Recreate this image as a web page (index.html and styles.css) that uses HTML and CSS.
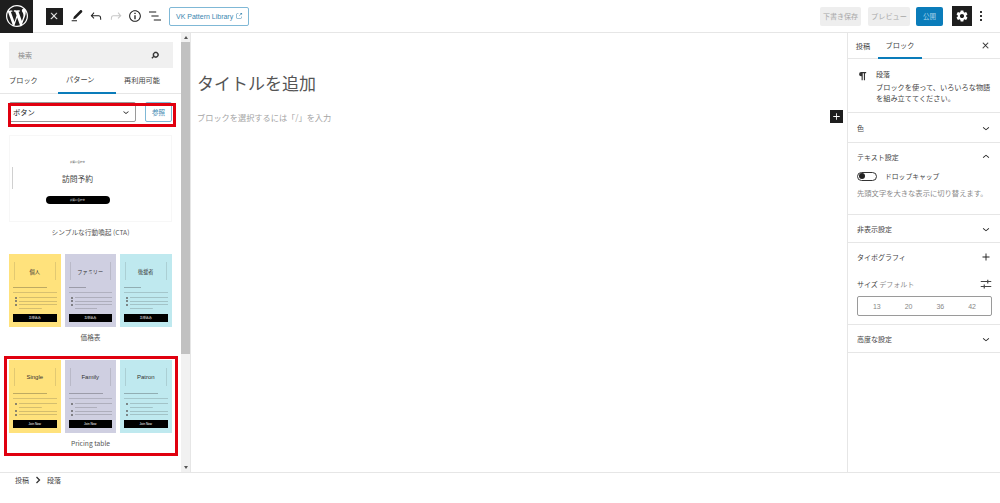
FILE: index.html
```html
<!DOCTYPE html>
<html lang="ja">
  <head>
    <meta charset="UTF-8" />
    <title>新規投稿を追加</title>
    <link rel="stylesheet" href="styles.css">
  </head>
  <body>
    <svg class="icon-defs" width="0" height="0">
      <symbol id="i-chev-down" viewBox="0 0 24 24"><path d="M17.5 11.6L12 16l-5.5-4.4.9-1.2L12 14l4.5-3.6 1 1.2z"/></symbol>
      <symbol id="i-chev-up" viewBox="0 0 24 24"><path d="M6.5 12.4L12 8l5.5 4.4-.9 1.2L12 10l-4.5 3.6-1-1.2z"/></symbol>
      <symbol id="i-close" viewBox="0 0 24 24"><path d="M13 11.8l6.1-6.3-1-1-6.1 6.2-6.1-6.2-1 1 6.1 6.3-6.5 6.7 1 1 6.5-6.6 6.5 6.6 1-1z"/></symbol>
      <symbol id="i-plus" viewBox="0 0 24 24"><path d="M18 11.2h-5.2V6h-1.6v5.2H6v1.6h5.2V18h1.6v-5.2H18z"/></symbol>
    </svg>

    <div class="editor">
      <header class="topbar">
        <a class="wp-logo">
          <svg width="22" height="22" viewBox="0 0 20 20"><path d="M20 10c0-5.51-4.49-10-10-10C4.48 0 0 4.49 0 10c0 5.52 4.48 10 10 10 5.51 0 10-4.48 10-10zM7.78 15.37L4.37 6.22c.55-.02 1.17-.08 1.17-.08.5-.06.44-1.13-.06-1.11 0 0-1.45.11-2.37.11-.18 0-.37 0-.58-.01C4.12 2.69 6.87 1.11 10 1.11c2.33 0 4.45.87 6.05 2.34-.68-.11-1.65.39-1.65 1.58 0 .74.45 1.36.9 2.1.35.61.55 1.36.55 2.46 0 1.49-1.4 5-1.4 5l-3.03-8.37c.54-.02.82-.17.82-.17.5-.05.44-1.25-.06-1.22 0 0-1.44.12-2.38.12-.87 0-2.33-.12-2.33-.12-.5-.03-.56 1.2-.06 1.22l.92.08 1.26 3.41zM17.41 10c.24-.64.74-1.87.43-4.25.7 1.29 1.05 2.71 1.05 4.25 0 3.29-1.73 6.24-4.4 7.78.97-2.59 1.94-5.2 2.92-7.78zM6.1 18.09C3.12 16.65 1.11 13.53 1.11 10c0-1.3.23-2.48.72-3.59C3.25 10.3 4.67 14.2 6.1 18.09zm4.03-6.63l2.58 6.98c-.86.29-1.76.45-2.71.45-.79 0-1.57-.11-2.29-.33.81-2.38 1.62-4.74 2.42-7.1z"/></svg>
        </a>
        <div class="tools">
          <button class="tool tool-dark"><svg class="bold" width="10" height="10"><use href="#i-close"/></svg></button>
          <button class="tool"><svg width="16" height="16" viewBox="0 0 24 24"><path d="M4 20h8v-1.5H4V20zM18.9 3.5c-.6-.6-1.5-.6-2.1 0L7.2 13.1l-.9 3.7 3.7-.9 9.6-9.6c.6-.6.6-1.5 0-2.1l-.7-.7z"/></svg></button>
          <button class="tool"><svg width="16" height="16" viewBox="0 0 24 24"><path d="M18.3 11.7c-.6-.6-1.4-.9-2.3-.9H6.7l2.9-3.3-1.1-1-4.5 5L8.5 16l1-1-2.7-2.7H16c.5 0 .9.2 1.3.5 1 1 1 3.4 1 4.5v.3h1.5v-.2c0-1.5 0-4.3-1.5-5.7z"/></svg></button>
          <button class="tool tool-off"><svg width="16" height="16" viewBox="0 0 24 24"><path d="M15.6 6.5l-1.1 1 2.9 3.3H8c-.9 0-1.7.3-2.3.9-1.4 1.5-1.4 4.2-1.4 5.6v.2h1.5v-.3c0-1.1 0-3.5 1-4.5.3-.3.7-.5 1.3-.5h9.2L14.5 15l1.1 1.1 4.6-4.6-4.6-5z"/></svg></button>
          <button class="tool"><svg width="16" height="16" viewBox="0 0 24 24"><path d="M12 3.2c-4.8 0-8.8 3.9-8.8 8.8 0 4.8 3.9 8.8 8.8 8.8 4.8 0 8.8-3.9 8.8-8.8 0-4.8-4-8.8-8.8-8.8zm0 16c-4 0-7.2-3.3-7.2-7.2C4.8 8 8 4.8 12 4.8s7.2 3.3 7.2 7.2c0 4-3.2 7.2-7.2 7.2zM11 17h2v-6h-2v6zm0-8h2V7h-2v2z"/></svg></button>
          <button class="tool"><svg width="16" height="16" viewBox="0 0 24 24"><path d="M13.8 5.2H3v1.5h10.8V5.2zm-3.6 12v1.5H21v-1.5H10.2zm7.2-6H6.6v1.5h10.8v-1.5z"/></svg></button>
        </div>
        <a class="vk-link">VK Pattern Library
          <svg width="8" height="8" viewBox="0 0 24 24"><path d="M18.2 17c0 .7-.6 1.2-1.2 1.2H7c-.7 0-1.2-.6-1.2-1.2V7c0-.7.6-1.2 1.2-1.2h3.2V4.2H7C5.5 4.2 4.2 5.5 4.2 7v10c0 1.5 1.2 2.8 2.8 2.8h10c1.5 0 2.8-1.2 2.8-2.8v-3.6h-1.5V17zM14.9 3v1.5h3.7l-6.4 6.4 1.1 1.1 6.4-6.4v3.7h1.5V3h-6.3z"/></svg>
        </a>
        <div class="top-actions">
          <button class="btn-muted btn-draft">下書き保存</button>
          <button class="btn-muted btn-preview">プレビュー</button>
          <button class="btn-publish">公開</button>
          <button class="btn-settings">
            <svg width="14" height="14" viewBox="0 0 24 24"><path d="M19.14,12.94c0.04-0.3,0.06-0.61,0.06-0.94c0-0.32-0.02-0.64-0.07-0.94l2.03-1.58c0.18-0.14,0.23-0.41,0.12-0.61 l-1.92-3.32c-0.12-0.22-0.37-0.29-0.59-0.22l-2.39,0.96c-0.5-0.38-1.03-0.7-1.62-0.94L14.4,2.81c-0.04-0.24-0.24-0.41-0.48-0.41 h-3.84c-0.24,0-0.43,0.17-0.47,0.41L9.25,5.35C8.66,5.59,8.12,5.92,7.63,6.29L5.24,5.33c-0.22-0.08-0.47,0-0.59,0.22L2.74,8.87 C2.62,9.08,2.66,9.34,2.86,9.48l2.03,1.58C4.84,11.36,4.8,11.69,4.8,12s0.02,0.64,0.07,0.94l-2.03,1.58 c-0.18,0.14-0.23,0.41-0.12,0.61l1.92,3.32c0.12,0.22,0.37,0.29,0.59,0.22l2.39-0.96c0.5,0.38,1.03,0.7,1.62,0.94l0.36,2.54 c0.05,0.24,0.24,0.41,0.48,0.41h3.84c0.24,0,0.44-0.17,0.47-0.41l0.36-2.54c0.59-0.24,1.13-0.56,1.62-0.94l2.39,0.96 c0.22,0.08,0.47,0,0.59-0.22l1.92-3.32c0.12-0.22,0.07-0.47-0.12-0.61L19.14,12.94z M12,15.6c-1.98,0-3.6-1.62-3.6-3.6 s1.62-3.6,3.6-3.6s3.6,1.62,3.6,3.6S13.98,15.6,12,15.6z"/></svg>
          </button>
          <span class="dots"><i></i><i></i><i></i></span>
        </div>
      </header>

      <div class="workspace">
        <aside class="inserter">
          <div class="inserter-body">
            <div class="search">
              <span>検索</span>
              <svg class="bold" width="12" height="12" viewBox="0 0 24 24"><path d="M13.5 6C10.5 6 8 8.5 8 11.5c0 1.1.3 2.1.9 3l-3.4 3 1 1.1 3.4-2.9c1 .9 2.2 1.4 3.6 1.4 3 0 5.5-2.5 5.5-5.5C19 8.5 16.500 6 13.5 6zm0 9.5c-2.2 0-4-1.8-4-4s1.8-4 4-4 4 1.8 4 4-1.8 4-4 4z"/></svg>
            </div>
            <nav class="ins-tabs">
              <span class="ins-tab">ブロック</span>
              <span class="ins-tab is-active">パターン</span>
              <span class="ins-tab">再利用可能</span>
            </nav>
            <div class="category">
              <div class="select">
                <span>ボタン</span>
                <svg width="12" height="12"><use href="#i-chev-down"/></svg>
              </div>
              <button class="browse">参照</button>
            </div>

            <figure class="pattern">
              <div class="cta">
                <span class="cta-small">お問い合わせ</span>
                <span class="cta-title">訪問予約</span>
                <span class="cta-btn">お問い合わせ</span>
              </div>
              <figcaption>シンプルな行動喚起 (CTA)</figcaption>
            </figure>

            <figure class="pattern pattern-pricing">
              <div class="plans">
                <div class="plan plan-yellow">
                  <div class="plan-head">個人</div>
                  <div class="plan-line short"></div>
                  <hr />
                  <ul><li></li><li></li><li class="two"></li></ul>
                  <div class="plan-btn">お申込み</div>
                </div>
                <div class="plan plan-purple">
                  <div class="plan-head">ファミリー</div>
                  <div class="plan-line shorter"></div>
                  <hr />
                  <ul><li></li><li></li><li class="two"></li></ul>
                  <div class="plan-btn">お申込み</div>
                </div>
                <div class="plan plan-blue">
                  <div class="plan-head">後援者</div>
                  <div class="plan-line shorter"></div>
                  <hr />
                  <ul><li></li><li></li><li class="two"></li></ul>
                  <div class="plan-btn">お申込み</div>
                </div>
              </div>
              <figcaption>価格表</figcaption>
            </figure>

            <figure class="pattern pattern-pricing">
              <div class="plans">
                <div class="plan plan-yellow">
                  <div class="plan-head latin">Single</div>
                  <div class="plan-line short"></div>
                  <hr />
                  <ul><li class="two"></li><li></li><li></li></ul>
                  <div class="plan-btn">Join Now</div>
                </div>
                <div class="plan plan-purple">
                  <div class="plan-head latin">Family</div>
                  <div class="plan-line short"></div>
                  <hr />
                  <ul><li class="two"></li><li></li><li></li></ul>
                  <div class="plan-btn">Join Now</div>
                </div>
                <div class="plan plan-blue">
                  <div class="plan-head latin">Patron</div>
                  <div class="plan-line short"></div>
                  <hr />
                  <ul><li class="two"></li><li></li><li></li></ul>
                  <div class="plan-btn">Join Now</div>
                </div>
              </div>
              <figcaption>Pricing table</figcaption>
            </figure>
          </div>

          <div class="scrollbar">
            <span class="arrow arrow-up"></span>
            <div class="thumb"></div>
            <span class="arrow arrow-down"></span>
          </div>

          <!-- red annotations over the screenshot -->
          <div class="mark mark-select"></div>
          <div class="mark mark-pattern"></div>
        </aside>

        <main class="canvas">
          <h1 class="post-title">タイトルを追加</h1>
          <div class="block-row">
            <p class="placeholder">ブロックを選択するには「/」を入力</p>
            <button class="add-block"><svg width="13" height="13"><use href="#i-plus"/></svg></button>
          </div>
        </main>

        <aside class="settings">
          <nav class="set-tabs">
            <span class="set-tab">投稿</span>
            <span class="set-tab is-active">ブロック</span>
            <svg class="set-close bold" width="9" height="9"><use href="#i-close"/></svg>
          </nav>
          <div class="block-card">
            <svg class="pilcrow" width="14" height="14" viewBox="0 0 24 24"><path d="M9 3.5h11V6h-2.5v15H15V6h-2.5v15H10v-8.5H9a4.5 4.5 0 0 1 0-9z"/></svg>
            <div>
              <div class="card-title">段落</div>
              <p class="card-text">ブロックを使って、いろいろな物語を組み立ててください。</p>
            </div>
          </div>
          <section class="panel panel-color">
            <h2>色</h2>
            <svg width="14" height="14"><use href="#i-chev-down"/></svg>
          </section>
          <section class="panel-open panel-text">
            <div class="panel-row">
              <h2>テキスト設定</h2>
              <svg width="14" height="14"><use href="#i-chev-up"/></svg>
            </div>
            <div class="toggle-row">
              <span class="toggle"><i></i></span>
              <span>ドロップキャップ</span>
            </div>
            <p class="help">先頭文字を大きな表示に切り替えます。</p>
          </section>
          <section class="panel panel-hidden">
            <h2>非表示設定</h2>
            <svg width="14" height="14"><use href="#i-chev-down"/></svg>
          </section>
          <section class="panel-open panel-type">
            <div class="panel-row">
              <h2>タイポグラフィ</h2>
              <svg width="14" height="14"><use href="#i-plus"/></svg>
            </div>
            <div class="size-row">
              <span>サイズ <em>デフォルト</em></span>
              <svg width="14" height="14" viewBox="0 0 24 24"><path d="M3 7h11V4.500h2V7h5v1.500h-5V11h-2V8.500H3zM3 15.500h5V13h2v2.500h11V17H10v2.500H8V17H3z"/></svg>
            </div>
            <div class="sizes"><span>13</span><span>20</span><span>36</span><span>42</span></div>
          </section>
          <section class="panel panel-advanced">
            <h2>高度な設定</h2>
            <svg width="14" height="14"><use href="#i-chev-down"/></svg>
          </section>
        </aside>
      </div>

      <footer class="crumbs">
        <span>投稿</span>
        <svg width="6" height="8" viewBox="0 0 6 8"><path d="M1.500 1l3 3-3 3" fill="none" stroke="#333" stroke-width="1.300"/></svg>
        <span>段落</span>
      </footer>
    </div>
  </body>
</html>
```

FILE: styles.css
```css
* {
  box-sizing: border-box;
}
body {
  margin: 0;
  font-family: "Noto Sans CJK JP", "Liberation Sans", sans-serif;
  color: #333333;
  background-color: #ffffff;
}
button {
  font-family: inherit;
  border: none;
  padding: 0;
  margin: 0;
}
h1, h2, p, figure, ul, hr {
  margin: 0;
  padding: 0;
}
svg {
  display: block;
  fill: currentColor;
}
svg.bold {
  stroke: currentColor;
  stroke-width: 1.2px;
}
.icon-defs {
  position: absolute;
}
.editor {
  display: flex;
  flex-direction: column;
  width: 1000px;
  height: 503px;
  overflow: hidden;
}

/* top bar */
.topbar {
  display: flex;
  align-items: center;
  flex: none;
  height: 33px;
  border-bottom: 1px solid #e6e6e6;
}
.wp-logo {
  display: flex;
  align-items: center;
  justify-content: center;
  width: 33px;
  height: 33px;
  background-color: #1e1e1e;
  color: #ffffff;
}
.tools {
  display: flex;
  align-items: center;
  gap: 3px;
  margin-left: 13px;
}
.tool {
  display: flex;
  align-items: center;
  justify-content: center;
  width: 16.500px;
  height: 17px;
  background: none;
  color: #1e1e1e;
}
.tool-dark {
  margin-right: 3px;
  background-color: #1e1e1e;
  color: #ffffff;
}
.tool-off {
  color: #c8c8c8;
}
.vk-link {
  display: flex;
  align-items: center;
  gap: 2px;
  width: 80px;
  height: 19px;
  margin-left: 6px;
  padding: 0 0 0 6px;
  border: 1px solid #7fb8d6;
  border-radius: 2px;
  font-family: "Liberation Sans", sans-serif;
  font-size: 7px;
  color: #3a86b0;
  white-space: nowrap;
}
.top-actions {
  display: flex;
  align-items: center;
  margin-left: auto;
  height: 100%;
}
.btn-muted {
  height: 19px;
  background-color: #eeeeee;
  color: #a8a8a8;
  font-size: 7px;
  border-radius: 2px;
  white-space: nowrap;
}
.btn-draft {
  width: 41px;
}
.btn-preview {
  width: 42px;
  margin-left: 7px;
  font-size: 7.2px;
}
.btn-publish {
  width: 27px;
  height: 19px;
  margin-left: 6px;
  background-color: #0a7cba;
  color: #a5d3ea;
  font-size: 6.5px;
  border-radius: 2px;
}
.btn-settings {
  display: flex;
  align-items: center;
  justify-content: center;
  width: 20px;
  height: 20px;
  margin-left: 9px;
  background-color: #1e1e1e;
  color: #ffffff;
}
.dots {
  display: flex;
  flex-direction: column;
  gap: 2px;
  margin: 0 18px 0 8px;
}
.dots i {
  width: 2px;
  height: 2px;
  background-color: #333333;
}

/* main columns */
.workspace {
  display: flex;
  flex: 1;
  min-height: 0;
}

/* left inserter */
.inserter {
  position: relative;
  display: flex;
  flex: none;
  width: 191px;
  border-right: 1px solid #e6e6e6;
}
.inserter-body {
  width: 181px;
  padding: 9px 0 0 0;
  overflow: hidden;
}
.search {
  display: flex;
  align-items: center;
  justify-content: space-between;
  height: 26px;
  margin: 0 8px 0 9px;
  padding: 0 12px 0 9px;
  background-color: #f0f0f0;
  font-size: 7px;
  color: #8a8a8a;
}
.search svg {
  color: #222222;
}
.ins-tabs {
  display: flex;
  height: 26px;
  border-bottom: 1px solid #e6e6e6;
  font-size: 7.2px;
  color: #444444;
}
.ins-tab {
  display: flex;
  align-items: center;
  padding-bottom: 2px;
}
.ins-tab:nth-child(1) {
  width: 58px;
  padding-left: 9px;
}
.ins-tab:nth-child(2) {
  width: 58px;
  padding-left: 8px;
}
.ins-tab:nth-child(3) {
  padding-left: 8px;
}
.ins-tab.is-active {
  border-bottom: 2px solid #0a7cba;
  margin-bottom: -1px;
}
.category {
  display: flex;
  align-items: flex-start;
  gap: 9px;
  height: 41px;
  padding: 8px 0 0 9px;
}
.select {
  display: flex;
  align-items: center;
  justify-content: space-between;
  width: 127px;
  height: 20px;
  padding: 0 3px 0 3px;
  border: 1px solid #9a9a9a;
  border-radius: 2px;
  font-size: 7.3px;
  color: #222222;
}
.browse {
  width: 27px;
  height: 20px;
  background-color: #ffffff;
  border: 1px solid #7fb8d6;
  border-radius: 2px;
  color: #3a86b0;
  font-size: 6.5px;
}

/* pattern previews */
.cta {
  display: flex;
  flex-direction: column;
  align-items: center;
  height: 87px;
  margin: 0 9px;
  padding: 24px 26px 0 0;
  border: 1px solid #f7f7f7;
  background: linear-gradient(#d0d0d0, #d0d0d0) 2px 31px / 1px 22px no-repeat;
}
.cta-small {
  font-size: 2.5px;
  line-height: 4px;
  color: #333333;
}
.cta-title {
  margin-top: 8px;
  font-family: "Liberation Serif", "Noto Sans CJK JP", serif;
  font-size: 7.8px;
  line-height: 16px;
  color: #444444;
}
.cta-btn {
  display: flex;
  align-items: center;
  justify-content: center;
  width: 64px;
  height: 8px;
  margin-top: 8px;
  background-color: #000000;
  border-radius: 4px;
  font-size: 2.5px;
  color: #ffffff;
}
.pattern figcaption {
  margin-top: 1px;
  height: 18px;
  text-align: center;
  font-size: 6.7px;
  line-height: 18px;
  color: #555555;
}
.pattern-pricing {
  margin-top: 13px;
}
.pattern-pricing + .pattern-pricing {
  margin-top: 14px;
}
.plans {
  display: flex;
  gap: 4px;
  margin: 0 9px;
}
.plan {
  display: flex;
  flex-direction: column;
  width: 51.5px;
  height: 73px;
  padding: 8px 4px 5px;
}
.plan-yellow {
  background-color: #ffe27c;
}
.plan-purple {
  background-color: #cfcfe1;
}
.plan-blue {
  background-color: #bfe9ef;
}
.plan-head {
  display: flex;
  align-items: center;
  justify-content: center;
  height: 18px;
  margin: 0 1px;
  border-left: 1px solid rgba(60, 60, 60, 0.15);
  border-right: 1px solid rgba(60, 60, 60, 0.15);
  font-family: "Liberation Serif", "Noto Sans CJK JP", serif;
  font-size: 5.2px;
  color: #333333;
  white-space: nowrap;
}
.plan-head.latin {
  font-family: "Liberation Sans", sans-serif;
  font-size: 6px;
}
.plan-line {
  height: 1px;
  margin-top: 7px;
  background-color: rgba(40, 40, 40, 0.3);
}
.plan-line.short {
  width: 34px;
}
.plan-line.shorter {
  width: 17px;
}
.plan hr {
  height: 1px;
  margin-top: 4px;
  border: none;
  background-color: rgba(60, 60, 60, 0.2);
}
.plan ul {
  display: flex;
  flex-direction: column;
  gap: 2.5px;
  margin: 4px 0 0 3px;
  list-style: none;
  flex: 1;
}
.plan li {
  position: relative;
  height: 1px;
  margin-left: 3px;
  background-color: rgba(60, 60, 60, 0.22);
}
.plan li::before {
  content: "";
  position: absolute;
  left: -4px;
  top: -0.5px;
  width: 2px;
  height: 2px;
  border-radius: 50%;
  background-color: #666666;
}
.plan li.two {
  height: 5px;
  background:
    linear-gradient(rgba(60, 60, 60, 0.22), rgba(60, 60, 60, 0.22)) top left / 100% 1px no-repeat,
    linear-gradient(rgba(60, 60, 60, 0.22), rgba(60, 60, 60, 0.22)) bottom left / 60% 1px no-repeat;
}
.plan-btn {
  display: flex;
  align-items: center;
  justify-content: center;
  flex: none;
  height: 8px;
  background-color: #000000;
  font-family: "Liberation Sans", "Noto Sans CJK JP", sans-serif;
  font-size: 3px;
  color: #ffffff;
}

/* scrollbar */
.scrollbar {
  display: flex;
  flex-direction: column;
  align-items: center;
  width: 9px;
  background-color: #f1f1f1;
}
.thumb {
  width: 100%;
  height: 312px;
  background-color: #c1c1c1;
}
.arrow {
  flex: none;
  width: 0;
  height: 0;
  margin: 3px 0;
  border-left: 2.5px solid transparent;
  border-right: 2.5px solid transparent;
}
.arrow-up {
  border-bottom: 3px solid #555555;
}
.arrow-down {
  margin-top: auto;
  border-top: 3px solid #555555;
}

/* red marks */
.mark {
  position: absolute;
  border: 3px solid #e0000f;
}
.mark-select {
  left: 8px;
  top: 70px;
  width: 168px;
  height: 24px;
}
.mark-pattern {
  left: 4px;
  top: 323px;
  width: 174px;
  height: 100px;
}

/* editor canvas */
.canvas {
  flex: 1;
  min-width: 0;
  padding: 38px 4px 0 6px;
}
.post-title {
  font-family: "Liberation Serif", "Noto Sans CJK JP", serif;
  font-size: 17px;
  font-weight: 400;
  line-height: 28px;
  color: #555555;
}
.block-row {
  display: flex;
  align-items: center;
  justify-content: space-between;
  margin-top: 11px;
}
.placeholder {
  font-size: 8.2px;
  color: #a4a4a4;
}
.add-block {
  display: flex;
  align-items: center;
  justify-content: center;
  width: 13px;
  height: 13px;
  background-color: #1e1e1e;
  color: #ffffff;
}

/* right settings */
.settings {
  flex: none;
  width: 153px;
  border-left: 1px solid #e6e6e6;
  font-size: 7px;
  color: #444444;
}
.set-tabs {
  display: flex;
  align-items: center;
  height: 26px;
  padding-left: 8px;
  border-bottom: 1px solid #e6e6e6;
  font-size: 7.2px;
}
.set-tab {
  display: flex;
  align-items: center;
  justify-content: center;
  height: 26px;
}
.set-tab:nth-child(1) {
  width: 14px;
  white-space: nowrap;
}
.set-tab.is-active {
  width: 44px;
  margin-left: 8px;
  border-bottom: 2px solid #0a7cba;
  padding-top: 1px;
}
.set-close {
  margin-left: auto;
  margin-right: 10px;
  color: #222222;
}
.block-card {
  display: flex;
  gap: 8px;
  height: 54px;
  padding: 10px 6px 0 9px;
  border-bottom: 1px solid #e6e6e6;
}
.pilcrow {
  flex: none;
  color: #333333;
  width: 11px;
}
.card-title {
  font-size: 7px;
  line-height: 11px;
}
.card-text {
  margin-top: 2px;
  font-size: 7.2px;
  line-height: 11px;
  width: 116px;
}
.panel,
.panel-row {
  display: flex;
  align-items: center;
  justify-content: space-between;
  padding-right: 7px;
}
.panel {
  padding-left: 9px;
  border-bottom: 1px solid #e6e6e6;
}
.panel svg,
.panel-row svg {
  color: #222222;
}
.settings h2 {
  font-size: 7px;
  font-weight: 400;
  color: #444444;
}
.panel-color {
  height: 30px;
}
.panel-text {
  height: 72px;
  padding-left: 9px;
  border-bottom: 1px solid #e6e6e6;
}
.panel-row {
  height: 28px;
}
.toggle-row {
  display: flex;
  align-items: center;
  gap: 8px;
  font-size: 6.8px;
}
.toggle {
  display: flex;
  align-items: center;
  width: 20px;
  height: 9px;
  padding-left: 1px;
  border: 1px solid #333333;
  border-radius: 5px;
}
.toggle i {
  width: 6px;
  height: 6px;
  border-radius: 50%;
  background-color: #222222;
}
.help {
  margin-top: 7px;
  font-size: 7.3px;
  color: #8a8a8a;
}
.panel-hidden {
  height: 28px;
}
.panel-type {
  height: 82px;
  padding-left: 9px;
  border-bottom: 1px solid #e6e6e6;
}
.size-row {
  display: flex;
  align-items: center;
  justify-content: space-between;
  margin-top: 6px;
  padding-right: 7px;
  height: 14px;
}
.size-row em {
  font-style: normal;
  color: #8a8a8a;
}
.sizes {
  display: grid;
  grid-template-columns: repeat(4, 1fr);
  align-items: center;
  width: 135px;
  height: 20px;
  margin-top: 5px;
  padding: 0 3px;
  border: 1px solid #9a9a9a;
  border-radius: 2px;
  text-align: center;
  font-family: "Liberation Sans", sans-serif;
  font-size: 7px;
  color: #888888;
}
.panel-advanced {
  height: 28px;
}

/* breadcrumb */
.crumbs {
  display: flex;
  align-items: center;
  flex: none;
  gap: 6px;
  height: 31px;
  padding: 0 0 17px 15px;
  border-top: 1px solid #e6e6e6;
  font-size: 7px;
  color: #444444;
}
```
